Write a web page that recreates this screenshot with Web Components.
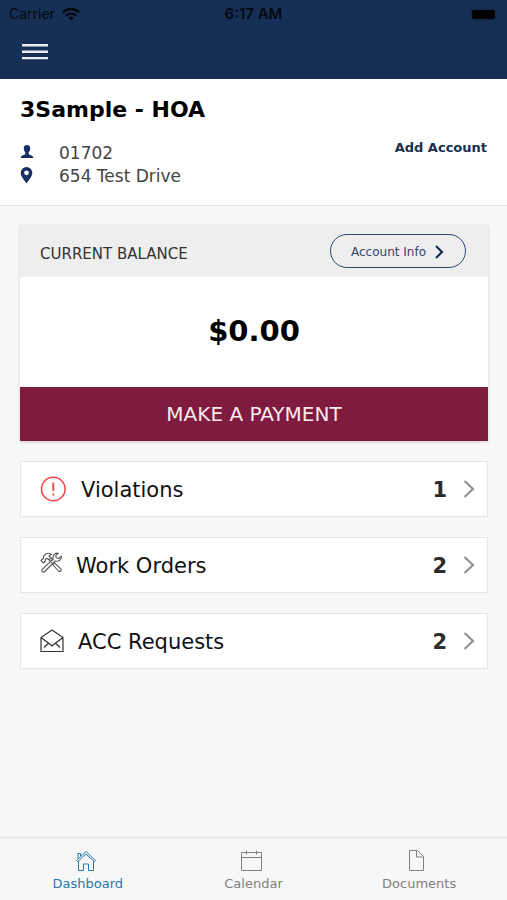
<!DOCTYPE html>
<html lang="en">
<head>
<meta charset="utf-8">
<meta name="viewport" content="width=device-width, initial-scale=1">
<title>Dashboard</title>
<style>
  body { margin: 0; background: #f8f8f8; color: #000; font-family: Verdana, "DejaVu Sans", sans-serif; }
</style>
</head>
<body>
<hoa-app></hoa-app>
<script>
const define = (name, html, setup) => {
  const template = document.createElement('template');
  template.innerHTML = '<style>*{box-sizing:border-box}svg{display:block;flex:none;fill:none}button{font:inherit;cursor:pointer}</style>' + html;
  customElements.define(name, class extends HTMLElement {
    constructor() {
      super();
      this.attachShadow({ mode: 'open' }).append(template.content.cloneNode(true));
    }
    connectedCallback() { if (setup) setup(this, this.shadowRoot); }
  });
};

define('status-bar', `
<style>
  :host { display: grid; grid-template-columns: 1fr auto 1fr; align-items: center; height: 28px; padding: 0 9px;
    color: #030910; font: 14px/16px Inter, "Liberation Sans", sans-serif; }
  .left { display: flex; align-items: center; gap: 7px; }
  .time { font-weight: 600; font-size: 15px; }
  .battery { justify-self: end; }
</style>
<span class="left"><span>Carrier</span>
  <svg width="18" height="14" viewBox="0 0 18 14" stroke="currentColor" stroke-width="2.4"><path d="M1 5.3a11.4 11.4 0 0 1 16 0M4 8.6a7.2 7.2 0 0 1 10 0"/><path d="M9 13.4 6.2 10.8a4 4 0 0 1 5.6 0Z" fill="currentColor" stroke="none"/></svg>
</span>
<span class="time">6:17 AM</span>
<svg class="battery" width="28" height="13" viewBox="0 0 28 13"><rect x="1" y="1" width="24" height="11" rx="3" stroke="#102746"/><rect x="2" y="2" width="23" height="9" rx="2" fill="#000"/><path d="M26.500 5v3" stroke="#102746"/></svg>`);

define('app-header', `
<style>
  :host { display: block; background: #162f55; height: 79px; }
  button { display: block; margin: 8px 0 0 14px; padding: 7px 8px; background: none; border: 0; color: #e9eef7; }
</style>
<status-bar></status-bar>
<button aria-label="Menu"><svg width="26" height="18" viewBox="0 0 26 18" stroke="currentColor" stroke-width="2.400"><path d="M0 2.300h26M0 8.700h26M0 15.100h26"/></svg></button>`);

define('account-summary', `
<style>
  :host { display: block; padding: 17px 20px; background: #fff; border-bottom: 1px solid #e6e6e6; }
  h1 { margin: 0; font-size: 22px; line-height: 28px; }
  .row { display: flex; justify-content: space-between; margin-top: 18px; }
  .line { display: flex; align-items: center; gap: 25px; color: #444; font-size: 17px; line-height: 23px; }
  .line svg { margin-bottom: 2px; }
  svg { color: #162f60; }
  a { color: #162f55; font-weight: bold; font-size: 13px; line-height: 16px; text-decoration: none; margin-top: -2px; }
</style>
<h1><slot name="name"></slot></h1>
<div class="row">
  <div>
    <div class="line"><svg width="14" height="18" viewBox="0 0 14 18"><path fill="currentColor" d="M7 1C4.800 1 3.600 2.500 3.800 4.700 4 6.600 4.700 7.800 5.400 8.500c.1 1.200-.2 1.900-1 2.300C2.500 11.500 1 11.600.7 14h12.600c-.3-2.400-1.800-2.500-3.700-3.200-.8-.4-1.100-1.100-1-2.300.7-.7 1.400-1.900 1.600-3.800C10.400 2.500 9.200 1 7 1Z"/></svg><slot name="number"></slot></div>
    <div class="line"><svg width="14" height="18" viewBox="0 0 14 18"><path fill="currentColor" fill-rule="evenodd" d="M6.500 0A5.800 5.800 0 0 0 .7 5.800C.7 9.500 4 12.800 6.500 16.500 9 12.800 12.300 9.500 12.300 5.800A5.800 5.800 0 0 0 6.500 0Zm0 3.400a2.400 2.400 0 1 1 0 4.800 2.400 2.400 0 0 1 0-4.800Z"/></svg><slot name="address"></slot></div>
  </div>
  <a href="#add">Add Account</a>
</div>`);

define('balance-card', `
<style>
  :host { display: block; background: #fff; box-shadow: 0 1px 3px #ccc; }
  header { display: flex; justify-content: space-between; align-items: center; padding: 9px 22px 9px 20px; background: #eee; }
  h2 { margin: 6px 0 0; font-size: 15px; line-height: 20px; font-weight: normal; color: #333; }
  .info { display: flex; align-items: center; gap: 9px; height: 34px; padding: 1px 20px 0; background: none;
    border: 1px solid #2c4670; border-radius: 17px; color: #34456a; font-size: 12px; }
  .amount { text-align: center; font-size: 29px; line-height: 36px; font-weight: bold; padding: 36px 0 38px; }
  .pay { display: block; width: 100%; height: 54px; border: 0; padding: 0; background: #7e1b3f; color: #fbe9f1; font-size: 20px; }
</style>
<header><h2>CURRENT BALANCE</h2>
<button class="info">Account Info <svg width="10" height="14" viewBox="0 0 10 14" stroke="#162f55" stroke-width="2.200"><path d="m1 1 6 6-6 6"/></svg></button></header>
<div class="amount"><slot></slot></div>
<button class="pay">MAKE A PAYMENT</button>`);

define('summary-row', `
<style>
  :host { display: block; }
  button { display: flex; align-items: center; gap: 14px; width: 100%; height: 56px; padding: 0 12px 0 19px;
    background: #fff; border: 1px solid #e6e6e6; color: #111; font-size: 21px; text-align: left; }
  .label { flex: 1; padding-top: 2px; }
  .count { padding-top: 2px; font-weight: bold; color: #2c2c2c; }
</style>
<button><slot name="icon"></slot><span class="label"><slot></slot></span>
<span class="count"><slot name="count"></slot></span><svg width="14" height="18" viewBox="0 0 14 18" stroke="#929292" stroke-width="2.200"><path d="m3.500 1 8.500 8-8.500 8"/></svg></button>`);

define('tab-item', `
<style>
  :host { flex: 1; color: #808080; }
  :host([current]) { color: #2878ae; }
  a { display: flex; flex-direction: column; align-items: center; gap: 2px; color: inherit; text-decoration: none; font-size: 13px; line-height: 18px; padding-top: 10px; }
</style>
<a href="#"><slot name="icon"></slot><slot></slot></a>`, (host, root) => {
  const link = root.querySelector('a');
  link.href = '#' + host.textContent.trim().toLowerCase();
  if (host.hasAttribute('current')) link.setAttribute('aria-current', 'page');
});

define('tab-bar', `
<style>
  :host { display: block; background: #f7f7f7; border-top: 3px solid #ebebeb; }
  nav { display: flex; height: 61px; padding: 0 5px; }
</style>
<nav><slot></slot></nav>`);

define('hoa-app', `
<style>
  :host { display: flex; flex-direction: column; min-height: 100vh; }
  main { flex: 1; display: flex; flex-direction: column; gap: 20px; padding: 19px 19px 20px 20px; }
</style>
<app-header></app-header>
<account-summary><span slot="name">3Sample - HOA</span><span slot="number">01702</span><span slot="address">654 Test Drive</span></account-summary>
<main>
  <balance-card>$0.00</balance-card>
  <summary-row>
    <svg slot="icon" width="27" height="26" viewBox="0 0 27 26" fill="none" stroke="#ee4444" stroke-width="1.500"><circle cx="13.300" cy="13" r="11.800"/><path d="M13.300 6.500v8.500M13.300 17.500v2" stroke-width="1.800"/></svg>
    Violations<span slot="count">1</span></summary-row>
  <summary-row>
    <svg slot="icon" width="22" height="28" viewBox="0 0 22 28" fill="none" stroke="#585858" stroke-width="1.100" stroke-linejoin="round">
      <path d="M1 9.500 3.500 12 5.500 10 5.200 8.500 7 7.200 9 8.800 11 6.800 9 5 11.500 3.200C8.500 1.500 5.500 2.500 3.500 5.200L3.600 7Z"/>
      <path d="m9 8.800 2.800 3M11 6.800l2.300 2.600M12.500 13.500l6 6.500c1.500 1.400 3.800-.6 2.300-2.200l-6.300-5.800Z"/>
      <path d="M18.200 2.200C14.800 1.500 12.200 4.500 13.200 8L2.500 18.200c-1.700 1.800.7 4 2.300 2.300L15.200 10c3.500 1 6.700-1.500 6.200-4.800L18.700 7.500 16.200 6.800 15.800 4.500Z"/></svg>
    Work Orders<span slot="count">2</span></summary-row>
  <summary-row>
    <svg slot="icon" width="24" height="24" viewBox="0 0 24 24" fill="none" stroke="#333" stroke-width="1.200" stroke-linejoin="round"><path d="M1 8.500 12 1l11 7.500V22.500H1ZM1 8.500l8 6 3 2.500 3-2.500 8-6M8.500 14.200 4 18.500M15.500 14.200l4.500 4.300"/></svg>
    ACC Requests<span slot="count">2</span></summary-row>
</main>
<tab-bar>
  <tab-item current><svg slot="icon" width="26" height="24" viewBox="0 0 26 24" fill="none" stroke="currentColor"><path d="M1.500 11.500 11 2.500l9.500 9-1.200 1.200L11 5l-8.300 7.700ZM3.500 12v9.500h5V15h5v6.500h5V12M3 9.500V4.500h2.500v2.700"/></svg>Dashboard</tab-item>
  <tab-item><svg slot="icon" width="26" height="24" viewBox="0 0 26 24" fill="none" stroke="currentColor"><path d="M.5 3.500h20v18H.5ZM.5 8.500h20M5.500 1.500v4M15.500 1.500v4"/></svg>Calendar</tab-item>
  <tab-item><svg slot="icon" width="26" height="24" viewBox="0 0 26 24" fill="none" stroke="currentColor"><path d="M3.500 1.500h8l6 6v14h-14ZM10.500 1.500v6.500h7"/></svg>Documents</tab-item>
</tab-bar>`);
</script>
</body>
</html>
